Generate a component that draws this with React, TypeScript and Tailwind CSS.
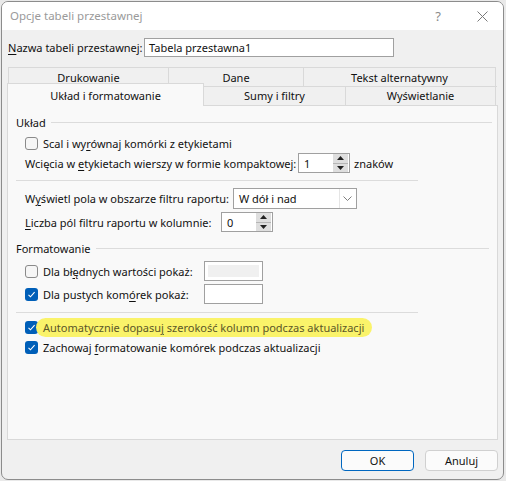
import React from "react";

const U = ({ children }: { children: React.ReactNode }) => (
  <span className="underline underline-offset-[2px] decoration-[1px]">{children}</span>
);

function Checkbox({ checked }: { checked?: boolean }) {
  if (checked) {
    return (
      <div className="w-[13px] h-[13px] rounded-[3px] bg-[#005fb8] flex items-center justify-center shrink-0">
        <svg width="9" height="9" viewBox="0 0 9 9" fill="none">
          <path d="M1.5 4.8 L3.5 6.8 L7.6 2.2" stroke="#ffffff" strokeWidth="1.1" />
        </svg>
      </div>
    );
  }
  return <div className="w-[13px] h-[13px] rounded-[3px] border border-[#8a8a8a] bg-[#f6f6f6] shrink-0" />;
}

function Spin({ value }: { value: string }) {
  return (
    <div className="w-[52px] h-[20px] border border-[#a0a0a0] bg-white flex items-center shrink-0">
      <span className="pl-[5px] flex-1">{value}</span>
      <div className="w-[15px] h-[18px] mr-[1px] flex flex-col bg-[#dedede]">
        <div className="flex-1 flex items-center justify-center border-b border-[#b5b5b5]">
          <svg width="7" height="4" viewBox="0 0 7 4">
            <path d="M0 4 L3.5 0 L7 4 Z" fill="#202020" />
          </svg>
        </div>
        <div className="flex-1 flex items-center justify-center">
          <svg width="7" height="4" viewBox="0 0 7 4">
            <path d="M0 0 L3.5 4 L7 0 Z" fill="#202020" />
          </svg>
        </div>
      </div>
    </div>
  );
}

export default function App() {
  return (
    <div className="w-[506px] h-[481px] bg-[#e9e9e9] pt-[1px] pl-[1px] font-['Noto_Sans',sans-serif] text-[11px] text-[#111111] leading-none whitespace-nowrap">
      <div className="w-[503px] h-[479px] border border-[#8c8c8c] rounded-[7px] overflow-hidden bg-[#f0f0f0] flex flex-col">
        {/* Title bar */}
        <div className="h-[28px] bg-white flex items-center pl-[8px] shrink-0">
          <span className="text-[#9a9a9a] text-[11.5px]">Opcje tabeli przestawnej</span>
          <span className="ml-auto text-[#8a8a8a] text-[13px] mr-[36px]">?</span>
          <svg width="11" height="11" viewBox="0 0 11 11" className="mr-[15px]">
            <path d="M0.5 0.5 L10.5 10.5 M10.5 0.5 L0.5 10.5" stroke="#7a7a7a" strokeWidth="1" />
          </svg>
        </div>

        <div className="px-[5px] flex flex-col">
          {/* Name */}
          <div className="mt-[8px] h-[19px] flex items-center pl-[1px]">
            <span className="w-[136px]">
              <U>N</U>azwa tabeli przestawnej:
            </span>
            <div className="w-[250px] h-[19px] border border-[#a0a0a0] bg-white flex items-center pl-[4px]">
              Tabela przestawna1
            </div>
          </div>

          {/* Tabs back row */}
          <div className="mt-[10px] h-[19px] flex ml-[1px]">
            <div className="w-[160px] border-t border-l border-[#d9d9d9] flex items-center justify-center">Drukowanie</div>
            <div className="w-[135px] border-t border-l border-[#d9d9d9] flex items-center justify-center">Dane</div>
            <div className="w-[193px] border-t border-l border-r border-[#d9d9d9] flex items-center justify-center">
              Tekst alternatywny
            </div>
          </div>
          {/* Tabs front row */}
          <div className="h-[19px] flex items-end border-t border-[#d9d9d9] ml-[1px] w-[489px]">
            <div className="relative z-10 w-[197px] -ml-[1px] h-[23px] -mb-[1px] bg-[#f9f9f9] border-t border-l border-r border-[#d9d9d9] flex items-center justify-center">
              Układ i formatowanie
            </div>
            <div className="w-[141px] h-[19px] flex items-center justify-center">Sumy i filtry</div>
            <div className="w-[151px] h-[19px] border-l border-r border-[#d9d9d9] flex items-center justify-center">
              Wyświetlanie
            </div>
          </div>

          {/* Panel */}
          <div className="h-[335px] w-[491px] border border-[#d9d9d9] bg-[#f9f9f9] flex flex-col">
            <div className="mt-[7px] h-[18px] flex items-center pl-[8px]">
              <span>Układ</span>
              <div className="ml-[5px] w-[441px] h-px bg-[#dcdcdc]" />
            </div>
            <div className="mt-[4px] h-[16px] flex items-center pl-[17px] gap-[5px]">
              <Checkbox />
              <span>
                Scal i wy<U>r</U>ównaj komórki z etykietami
              </span>
            </div>
            <div className="mt-[2px] h-[20px] flex items-center pl-[17px]">
              <span className="w-[273px]">
                Wcięcia w <U>e</U>tykietach wierszy w formie kompaktowej:
              </span>
              <Spin value="1" />
              <span className="ml-[4px]">znaków</span>
            </div>
            <div className="mt-[7px] ml-[8px] w-[402px] h-px bg-[#dcdcdc]" />
            <div className="mt-[7px] h-[21px] flex items-center pl-[17px]">
              <span className="w-[208px]">
                W<U>y</U>świetl pola w obszarze filtru raportu:
              </span>
              <div className="w-[124px] h-[21px] border border-[#a0a0a0] bg-white flex items-center">
                <span className="pl-[5px] flex-1">W dół i nad</span>
                <div className="w-[16px] h-[19px] mr-[1px] border-l border-[#e5e5e5] flex items-center justify-center">
                  <svg width="9" height="5" viewBox="0 0 9 5">
                    <path d="M0.5 0.5 L4.5 4.5 L8.5 0.5" stroke="#707070" fill="none" strokeWidth="0.9" />
                  </svg>
                </div>
              </div>
            </div>
            <div className="mt-[3px] h-[20px] flex items-center pl-[17px]">
              <span className="w-[196px]">
                <U>L</U>iczba pól filtru raportu w kolumnie:
              </span>
              <Spin value="0" />
            </div>
            <div className="mt-[7px] h-[18px] flex items-center pl-[8px]">
              <span>Formatowanie</span>
              <div className="ml-[6px] w-[393px] h-px bg-[#dcdcdc]" />
            </div>
            <div className="mt-[4px] h-[20px] flex items-center pl-[17px]">
              <Checkbox />
              <span className="ml-[5px] w-[161px]">
                Dla bł<U>ę</U>dnych wartości pokaż:
              </span>
              <div className="w-[59px] h-[20px] border border-[#a0a0a0] bg-white p-[3px]">
                <div className="w-full h-full bg-[#f0f0f0]" />
              </div>
            </div>
            <div className="mt-[3px] h-[20px] flex items-center pl-[17px]">
              <Checkbox checked />
              <span className="ml-[5px] w-[161px]">
                Dla pustych kom<U>ó</U>rek pokaż:
              </span>
              <div className="w-[59px] h-[20px] border border-[#a0a0a0] bg-white" />
            </div>
            <div className="mt-[8px] ml-[8px] w-[402px] h-px bg-[#dcdcdc]" />
            <div className="mt-[5px] h-[19px] flex items-center pl-[17px]">
              <Checkbox checked />
              <span className="-ml-[2px] h-[19px] pl-[7px] pr-[8px] rounded-full bg-[#faf36a] text-[#5a5628] flex items-center">
                Automatycznie dopasu<U>j</U>&nbsp;szerokość kolumn podczas aktualizacji
              </span>
            </div>
            <div className="mt-[2px] h-[16px] flex items-center pl-[17px] gap-[5px]">
              <Checkbox checked />
              <span>
                Zachowaj <U>f</U>ormatowanie komórek podczas aktualizacji
              </span>
            </div>
          </div>

          {/* Buttons */}
          <div className="mt-[10px] flex justify-end gap-[11px]">
            <button className="w-[73px] h-[21px] rounded-[4px] border border-[#0067c0] bg-[#fbfbfb] flex items-center justify-center">
              OK
            </button>
            <button className="w-[73px] h-[21px] rounded-[4px] border border-[#d0d0d0] bg-[#fbfbfb] flex items-center justify-center">
              Anuluj
            </button>
          </div>
        </div>
      </div>
    </div>
  );
}
